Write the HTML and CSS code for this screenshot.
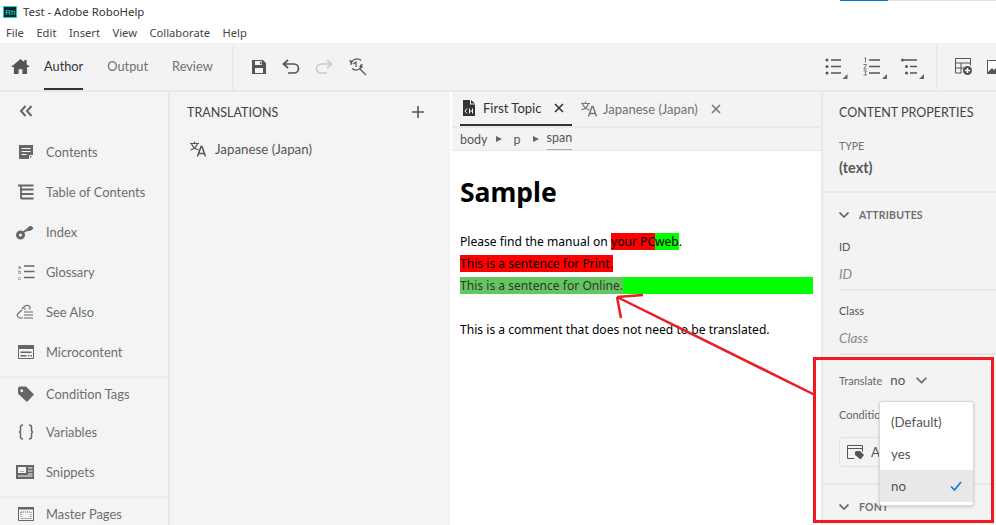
FILE: index.html
```html
<!DOCTYPE html>
<html lang="en">
<head>
<meta charset="utf-8">
<title>Test - Adobe RoboHelp</title>
<link rel="stylesheet" href="styles.css">
</head>
<body>
<div class="app">
  <header class="titlebar">
    <svg class="logo" viewBox="0 0 14 12"><rect x=".5" y=".5" width="13" height="11" fill="#05282b" stroke="#19d3c5"/><text x="2.200" y="9" class="logo-text">Rh</text></svg>
    <span class="title">Test - Adobe RoboHelp</span>
    <span class="winbar"><span class="winbar-blue"></span></span>
  </header>
  <nav class="menubar"><span>File</span><span>Edit</span><span>Insert</span><span>View</span><span>Collaborate</span><span>Help</span></nav>
  <div class="toolbar">
    <svg class="home" viewBox="0 0 20 18"><path d="M10 1 0 9.500h3V17h5v-5h4v5h5V9.500h3L16.500 6.500V2h-2.500v2.300z" fill="#555"/></svg>
    <div class="modes"><span class="mode active">Author</span><span class="mode">Output</span><span class="mode">Review</span></div>
    <span class="tool-div"></span>
    <div class="tools">
      <svg viewBox="0 0 16 16" width="16" height="16"><path d="M1 1h11l3 3v11H1z M4 2v4h7V2z M9 2.800h1.500v2.400H9z M4 9v5h8V9z" fill="#555" fill-rule="evenodd"/></svg>
      <svg viewBox="0 0 18 16" width="18" height="16"><path d="M6 1 1.500 5 6 9M2 5h10a4.500 4.500 0 0 1 0 9H6" fill="none" stroke="#555" stroke-width="1.700"/></svg>
      <svg viewBox="0 0 18 16" width="18" height="16"><path d="M12 1l4.500 4L12 9M16 5H6a4.500 4.500 0 0 0 0 9h6" fill="none" stroke="#ccc" stroke-width="1.700"/></svg>
      <svg viewBox="0 0 19 19" width="19" height="19"><path d="M3 8a6 6 0 0 1 10-4.500M14 7a6 6 0 0 1-10 4.500M5 7l3-2v5M12 12l6 6" fill="none" stroke="#555" stroke-width="1.200"/><path d="M1 3l4 1-2 3zM15 11l-4-1 2-3z" fill="#555"/></svg>
    </div>
    <span class="spacer"></span>
    <div class="tools-right">
      <svg viewBox="0 0 24 24" width="24" height="24"><path d="M6 5h10M6 11.500h10M6 18h10" stroke="#555" stroke-width="1.600"/><circle cx="2" cy="5" r="1.500" fill="#555"/><circle cx="2" cy="11.500" r="1.500" fill="#555"/><circle cx="2" cy="18" r="1.500" fill="#555"/><path d="M22.500 19v5h-5z" fill="#666"/></svg>
      <svg viewBox="0 0 24 24" width="24" height="24"><path d="M6 5h11M6 11.500h11M6 18h11" stroke="#555" stroke-width="1.600"/><path d="M1.500 3l1-.5v5M.5 9.500h3L.8 14h3M.5 16h3L2 18l1.500 2H.5" fill="none" stroke="#555" stroke-width=".8"/><path d="M24 19v5h-5z" fill="#666"/></svg>
      <svg viewBox="0 0 24 24" width="24" height="24"><path d="M3 5h13M9 11.500h7M9 18h7" stroke="#555" stroke-width="1.600"/><circle cx="1.500" cy="5" r="1.500" fill="#555"/><circle cx="5.500" cy="11.500" r="1.500" fill="#555"/><circle cx="5.500" cy="18" r="1.500" fill="#555"/><path d="M23 19v5h-5z" fill="#666"/></svg>
      <span class="tool-div right-div"></span>
      <svg viewBox="0 0 18 18" width="18" height="18"><path d="M.5 15V.5h15v7M.5 5h15M.5 10h8M.5 15h6M6 5v10" fill="none" stroke="#555"/><circle cx="12.500" cy="12.500" r="4.500" fill="#555"/><path d="M10 12.500h5M12.500 10v5" stroke="#fff" stroke-width="1.300"/></svg>
      <svg class="img-icon" viewBox="0 0 16 16" width="16" height="16"><path d="M0 1h16v14H0z" fill="#555"/><path d="M1 2h14v7l-3-3-5 5-2-2-4 4z" fill="#fff"/></svg>
    </div>
  </div>
  <main class="main">
    <aside class="nav">
      <svg class="collapse" viewBox="0 0 14 12" width="14" height="12"><path d="M6.500 1 2 6l4.500 5M12.500 1 8 6l4.500 5" fill="none" stroke="#666" stroke-width="2"/></svg>
      <div class="nav-group first">
        <div class="nav-item"><svg viewBox="0 0 16 16" width="16" height="16"><path d="M1 1h14v10l-4 4H1z" fill="#666"/><path d="M3.500 4.500h9M3.500 7.500h9M3.500 10.500h5" stroke="#f4f4f4" stroke-width="1.200"/><path d="M11.500 15v-3.500H15" fill="none" stroke="#f4f4f4"/></svg><span>Contents</span></div>
        <div class="nav-item"><svg viewBox="0 0 16 16" width="16" height="16"><path d="M0 1.500h15.500M3 1.500v13.500M3 5.500h12.500M3 10h12.500M3 14.500h12.500" fill="none" stroke="#666" stroke-width="1.800"/></svg><span>Table of Contents</span></div>
        <div class="nav-item"><svg viewBox="0 0 18 16" width="18" height="16" class="wide"><circle cx="4.500" cy="11" r="3" fill="none" stroke="#666" stroke-width="3"/><path d="M6.500 8.500 14 2.500l2 .5 1 1.500-3 2-1-.5-1 1-1-.5-1 1z" fill="#666" stroke="#666"/></svg><span>Index</span></div>
        <div class="nav-item"><svg viewBox="0 0 17 16" width="17" height="16" class="glossary"><path d="M6 2h10.500M6 7.500h10.500M6 13.500h10.500" stroke="#666" stroke-width="1.500"/><text x="0" y="4.500" class="abc">a</text><text x="0" y="10" class="abc">b</text><text x="0" y="15.500" class="abc">c</text></svg><span>Glossary</span></div>
        <div class="nav-item"><svg viewBox="0 0 18 16" width="18" height="16" class="wide"><path d="M6 5l3-3q2-1.500 4 0t.500 3.500M7 14H4q-3.500-1-2.500-4L6 6M8 8H17M8 11H17M8 14H17M8 5h2" fill="none" stroke="#666" stroke-width="1.100"/></svg><span>See Also</span></div>
        <div class="nav-item"><svg viewBox="0 0 16 14" width="16" height="14"><path d="M.5.500h15v13H.5z" fill="none" stroke="#666"/><path d="M0 0h16v4H0zM2.500 6.500h11v1.500h-11zM2.500 10h6v1.500h-6zM10 10h1.500v1.500H10zM12.500 10H14v1.500h-1.500z" fill="#666"/></svg><span>Microcontent</span></div>
      </div>
      <div class="nav-group second">
        <div class="nav-item"><svg viewBox="0 0 17 17" width="17" height="17"><path d="M0 1.500 1.500 0h7l8.500 8.500-7.500 8L0 7.500zM4 3a1.500 1.500 0 1 0 .01 0z" fill="#666" fill-rule="evenodd"/></svg><span>Condition Tags</span></div>
        <div class="nav-item"><svg viewBox="0 0 16 16" width="16" height="16"><path d="M5 1Q2.500 1 2.500 3v3Q2.500 8 1 8q1.500 0 1.500 2v3q0 2 2.500 2M11 1q2.500 0 2.500 2v3q0 2 1.500 2-1.500 0-1.500 2v3q0 2-2.500 2" fill="none" stroke="#666" stroke-width="1.500"/></svg><span>Variables</span></div>
        <div class="nav-item"><svg viewBox="0 0 18 14" width="18" height="14" class="wide"><path d="M0 0h18v14H0z" fill="#666"/><path d="M2 2h8v6H2z" fill="#f4f4f4"/><path d="M3 7l2-2 1 1 1-1 2 2zM12 3h4.500M12 6h4.500M12 9h4.500M2 11h14.500" stroke="#f4f4f4" fill="#666"/></svg><span>Snippets</span></div>
      </div>
      <div class="nav-group third">
        <div class="nav-item"><svg viewBox="0 0 16 14" width="16" height="14"><path d="M.5.500h15v13H.5z" fill="none" stroke="#666"/><path d="M0 0h16v2.500H0z" fill="#666"/><path d="M3 5h10v6.500H3z" fill="none" stroke="#666" stroke-dasharray="1 1"/></svg><span>Master Pages</span></div>
      </div>
    </aside>
    <section class="panel">
      <div class="panel-head"><span>TRANSLATIONS</span><svg viewBox="0 0 12 12" width="12" height="12"><path d="M6 0v12M0 6h12" stroke="#555" stroke-width="1.600"/></svg></div>
      <div class="panel-row">
        <svg viewBox="0 0 16 16" width="16" height="16"><path d="M0 2.500h9M4.500 .5v2M1.500 2.500q1.500 5 7 6.500M7.500 2.500q-1.500 5-7 6.500" fill="none" stroke="#555" stroke-width="1.100"/><path d="M7.500 15.500 11 5.500h1l3.500 10M8.800 12.500h5.400" fill="none" stroke="#555" stroke-width="1.500"/></svg>
        <span>Japanese (Japan)</span>
      </div>
    </section>
    <section class="editor">
      <div class="tabs">
        <div class="tab active">
          <svg viewBox="0 0 12 16" width="12" height="16"><path d="M0 0h7v4.500h5V16H0zM8 0l4 3.500H8z" fill="#333"/><path d="M4 8.500 2 11l2 2.500M6.500 8.500v5M9.500 8.500v5M6.500 11h3" fill="none" stroke="#fff"/></svg>
          <span class="tab-text">First Topic</span>
          <svg class="close" viewBox="0 0 10 10" width="10" height="10"><path d="M1 1l8 8M9 1 1 9" stroke="#333" stroke-width="1.600"/></svg>
        </div>
        <div class="tab">
          <svg viewBox="0 0 16 16" width="16" height="16"><path d="M0 2.500h9M4.500 .5v2M1.500 2.500q1.500 5 7 6.500M7.500 2.500q-1.500 5-7 6.500" fill="none" stroke="#777" stroke-width="1.100"/><path d="M7.500 15.500 11 5.500h1l3.500 10M8.800 12.500h5.400" fill="none" stroke="#777" stroke-width="1.500"/></svg>
          <span class="tab-text">Japanese (Japan)</span>
          <svg class="close" viewBox="0 0 10 10" width="10" height="10"><path d="M1 1l8 8M9 1 1 9" stroke="#777" stroke-width="1.600"/></svg>
        </div>
      </div>
      <div class="crumbs">
        <span>body</span><i class="tri"></i><span class="crumb-p">p</span><i class="tri tri-2"></i><span class="crumb-cur">span</span>
      </div>
      <article class="doc">
        <h1>Sample</h1>
        <p>Please find the manual on <span class="red">your PC</span><span class="green">web</span>.</p>
        <p><span class="red">This is a sentence for Print.</span></p>
        <p class="green"><span class="sel">This is a sentence for Online.</span></p>
        <p class="last">This is a comment that does not need to be translated.</p>
      </article>
    </section>
    <aside class="props">
      <h2>CONTENT PROPERTIES</h2>
      <div class="type-block">
        <div class="label-type">TYPE</div>
        <div class="type-val">(text)</div>
      </div>
      <div class="section-head">
        <svg viewBox="0 0 10 6" width="10" height="6"><path d="M.5.500 5 5 9.500.500" fill="none" stroke="#666" stroke-width="1.700"/></svg>
        <span>ATTRIBUTES</span>
      </div>
      <div class="field field-first"><div class="flabel">ID</div><div class="fval">ID</div></div>
      <div class="field"><div class="flabel">Class</div><div class="fval">Class</div></div>
      <div class="translate">
        <span class="tlabel">Translate</span><span class="tval">no</span>
        <svg viewBox="0 0 10 6" width="11" height="7"><path d="M.5.500 5 5 9.500.500" fill="none" stroke="#666" stroke-width="1.500"/></svg>
      </div>
      <div class="cond-label">Condition</div>
      <div class="cond-btn">
        <svg viewBox="0 0 17 15" width="17" height="15"><path d="M.5 13.500V.5h15v6M.5 13.500h7M.5 3.500h15" fill="none" stroke="#555"/><path d="M8 7l1-1h4l4 4-3.500 4.500L8 10z" fill="#555"/></svg>
        <span>Apply</span>
      </div>
      <div class="section-head font-head">
        <svg viewBox="0 0 10 6" width="10" height="6"><path d="M.5.500 5 5 9.500.500" fill="none" stroke="#666" stroke-width="1.700"/></svg>
        <span>FONT</span>
      </div>
    </aside>
  </main>
  <div class="dropdown">
    <div class="opt">(Default)</div>
    <div class="opt">yes</div>
    <div class="opt selected"><span>no</span><svg viewBox="0 0 12 10" width="12" height="10"><path d="M1 5.500 4.500 9 11 1" fill="none" stroke="#1473e6" stroke-width="1.700"/></svg></div>
  </div>
  <svg class="annot" viewBox="0 0 996 525" width="996" height="525">
    <path d="M815 395 617 297M617 297l26-2M617 297l4 21" fill="none" stroke="#ed1c24" stroke-width="2.500"/>
    <rect x="814.500" y="358.500" width="178" height="163" fill="none" stroke="#ed1c24" stroke-width="3"/>
  </svg>
</div>
</body>
</html>
```
FILE: styles.css
```css
* { box-sizing: border-box; }
html, body { margin: 0; padding: 0; }
body { width: 996px; height: 525px; overflow: hidden; background: #fff; }
.app { position: relative; width: 996px; height: 525px; overflow: hidden; display: flex; flex-direction: column; font-family: "Lato", "Liberation Sans", sans-serif; color: #666; font-size: 12.900px; }
svg { display: block; flex: none; }

.titlebar { height: 22px; display: flex; align-items: center; padding-left: 3px; background: #fff; position: relative; }
.logo { width: 14px; height: 12px; margin-top: 1px; }
.logo-text { font-family: "Liberation Sans", sans-serif; font-size: 8px; fill: #2ee6d6; }
.title { font-family: "Noto Sans", sans-serif; font-size: 11.400px; color: #333; margin-left: 6px; }
.winbar { position: absolute; top: 0; left: 840px; right: 0; height: 1px; background: #e1e1e1; }
.winbar-blue { display: block; width: 48px; height: 1px; background: #0078d4; }

.menubar { height: 21px; display: flex; gap: 12.500px; align-items: center; padding-left: 6px; font-family: "Noto Sans", sans-serif; font-size: 11.200px; color: #444; }

.toolbar { height: 49px; flex: none; background: #f3f3f3; border-bottom: 2px solid #e8e8e8; display: flex; align-items: stretch; }
.home { width: 19px; height: 17px; margin: 15px 0 0 11px; }
.modes { display: flex; margin-left: 14px; gap: 24px; }
.mode { font-size: 12.800px; padding-top: 15px; color: #707070; height: 47px; }
.mode.active { color: #333; border-bottom: 2px solid #333; }
.tool-div { width: 2px; height: 44px; margin: 3px 0 0 19px; background: #e9e9e9; flex: none; }
.tools { display: flex; align-items: center; gap: 15px; margin-left: 17px; height: 47px; }
.spacer { flex: 1; }
.tools-right { width: 171px; overflow: hidden; display: flex; align-items: center; flex: none; gap: 14px; height: 47px; }
.tools-right .right-div { margin: 0 0 0 -3px; }
.tools-right .right-div + svg { margin-left: 3px; }

.main { flex: 1; display: flex; min-height: 0; }
.nav { width: 170px; flex: none; background: #f4f4f4; border-right: 2px solid #e9e9e9; }
.collapse { margin: 13px 0 0 19px; }
.nav-group { display: flex; flex-direction: column; }
.nav-item { height: 40px; flex: none; display: flex; align-items: center; padding-left: 18px; color: #6e6e6e; }
.nav-item svg { width: 16px; margin-right: 12px; }
.nav-item svg.wide { width: 18px; margin-left: -2px; }
.nav-item svg.glossary { width: 17px; margin-right: 11px; }
.abc { font-family: "Liberation Sans", sans-serif; font-size: 5.500px; fill: #666; }
.first { margin-top: 15px; height: 246px; border-bottom: 2px solid #ececec; }
.second { height: 120px; border-bottom: 2px solid #ececec; }
.second .nav-item:nth-child(1) { height: 32px; }
.second .nav-item:nth-child(2) { height: 44px; }
.second .nav-item:nth-child(3) { height: 36px; }
.third .nav-item { height: 32px; }

.panel { width: 280px; flex: none; background: #f4f4f4; padding-left: 17px; }
.panel-head { height: 40px; display: flex; align-items: center; justify-content: space-between; padding: 0 26px 0 0; font-size: 12.500px; color: #444; }
.panel-row { display: flex; align-items: center; gap: 9px; margin: 7px 0 0 3px; color: #555; font-size: 13.300px; height: 20px; }

.editor { width: 369px; flex: none; margin-left: 2px; display: flex; flex-direction: column; background: #fff; }
.tabs { height: 34px; flex: none; background: #f3f3f3; display: flex; }
.tab { display: flex; align-items: center; gap: 6px; height: 34px; color: #707070; font-size: 13px; padding-left: 9px; }
.tab-text { white-space: nowrap; }
.tab .close { margin-left: 7px; }
.tab.active { flex: none; width: 112px; margin-left: 8px; padding-left: 3px; color: #333; border-bottom: 2px solid #333; gap: 8px; }
.tab.active .close { margin-left: 5px; }
.crumbs { height: 25px; flex: none; background: #f3f3f3; border-top: 2px solid #e9e9e9; border-bottom: 1px solid #e8e8e8; display: flex; align-items: center; padding-left: 8px; font-size: 12.500px; color: #555; }
.tri { width: 0; height: 0; border-left: 6px solid #666; border-top: 3px solid transparent; border-bottom: 3px solid transparent; margin: 0 12px 0 8px; }
.tri-2 { margin: 0 8px 0 12px; }
.crumb-cur { height: 22px; border-bottom: 1px solid #aaa; line-height: 20px; }
.doc { flex: 1; padding: 26px 8px 0 8px; font-family: "Noto Sans", sans-serif; font-size: 12.100px; color: #000; }
.doc h1 { font-size: 26.500px; line-height: 30px; margin: 0 0 26px; font-weight: 700; color: #000; }
.doc p { margin: 0 0 5px; line-height: 17px; height: 17px; }
.doc p.last { margin-top: 27px; }
.red { background: #f00; }
.green { background: #0f0; }
.sel { background: #63c75f; color: #333; display: inline-block; height: 17px; }

.props { flex: 1; min-width: 0; background: #f3f3f3; border-left: 2px solid #e9e9e9; padding-left: 16px; position: relative; }
.props h2 { font-size: 12.500px; font-weight: 400; color: #444; margin: 12px 0 0; line-height: 17px; white-space: nowrap; }
.type-block { margin-left: -16px; padding: 18px 0 0 16px; height: 72px; border-bottom: 2px solid #e9e9e9; }
.label-type { font-size: 10.500px; color: #707070; line-height: 14px; }
.type-val { font-size: 14.500px; font-weight: 700; color: #555; margin-top: 6px; line-height: 18px; }
.section-head { display: flex; align-items: center; gap: 10px; margin-top: 14px; height: 16px; font-size: 10.500px; font-weight: 700; color: #707070; letter-spacing: .2px; }
.field { border-bottom: 2px solid #e6e6e6; height: 64px; padding-top: 13px; }
.field-first { margin-top: 4px; }
.flabel { font-size: 11px; color: #555; line-height: 14px; }
.fval { font-size: 13.500px; font-style: italic; color: #888; margin-top: 11px; line-height: 18px; }
.translate { display: flex; align-items: center; margin-top: 16px; height: 18px; }
.tlabel { font-size: 11px; color: #666; }
.tval { font-size: 13.300px; color: #555; margin: 0 11px 0 8px; }
.cond-label { font-size: 11px; color: #666; margin-top: 18px; line-height: 16px; }
.cond-btn { margin-top: 14px; width: 120px; height: 30px; border: 1px solid #e1e1e1; border-radius: 3px; display: flex; align-items: center; gap: 7px; padding-left: 7px; color: #555; font-size: 13.300px; }
.section-head.font-head { margin: 16px 0 0 -16px; padding: 13px 0 0 16px; border-top: 2px solid #e9e9e9; height: 32px; }

.dropdown { position: absolute; left: 879px; top: 401px; width: 95px; height: 105px; background: #fff; border: 1px solid #d9d9d9; border-radius: 3px; box-shadow: 0 1px 3px rgba(0,0,0,.18); padding: 4px 0 3px; font-size: 13.300px; color: #555; }
.opt { height: 32px; display: flex; align-items: center; justify-content: space-between; padding: 0 11px 1px 11px; }
.opt.selected { background: #e8e8e8; }
.annot { position: absolute; left: 0; top: 0; pointer-events: none; }
```
